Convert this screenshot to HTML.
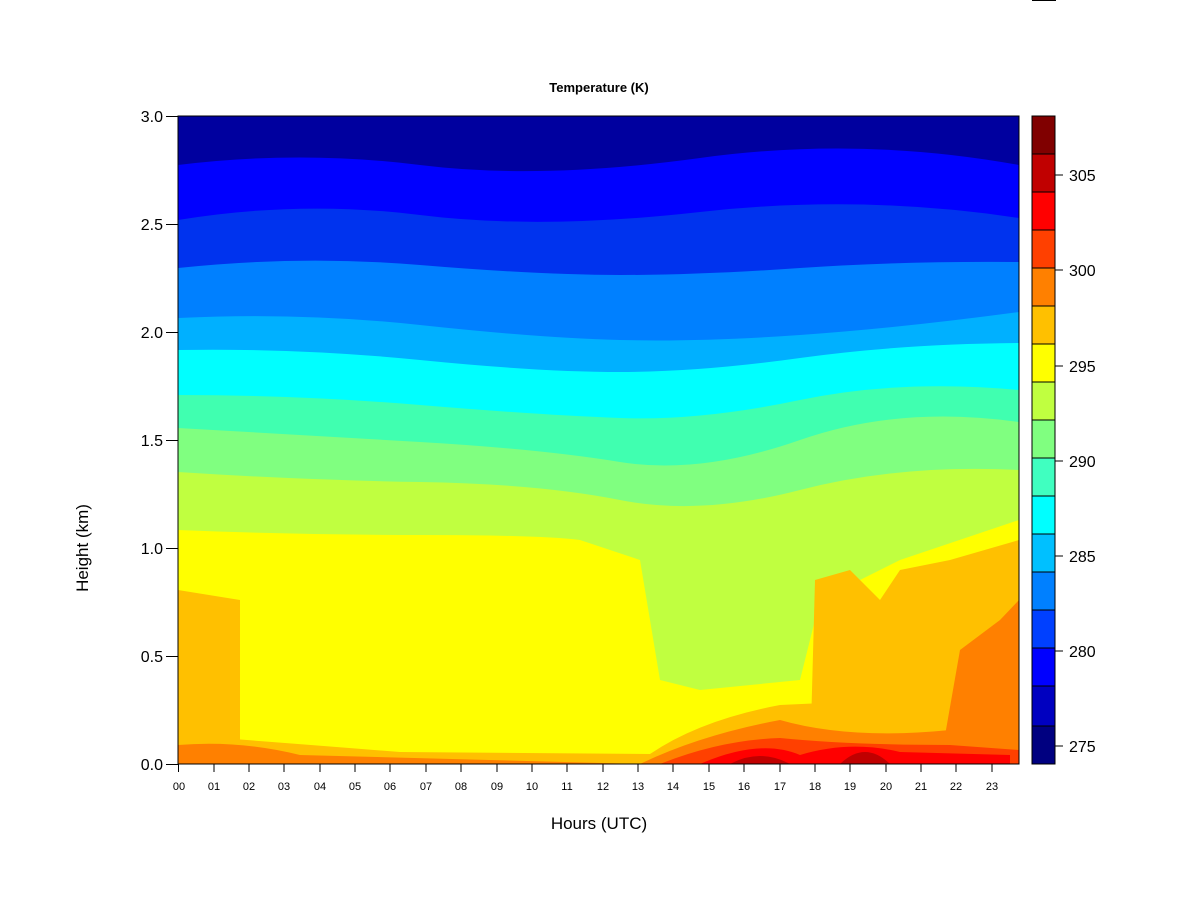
<!DOCTYPE html><html><head><style>body{margin:0;background:#fff}svg{display:block}text{font-family:"Liberation Sans",Arial,sans-serif}</style></head><body>
<svg width="1200" height="900" xmlns="http://www.w3.org/2000/svg">
<defs><clipPath id="c"><rect x="178" y="116" width="841" height="648"/></clipPath></defs>
<g clip-path="url(#c)">
<rect x="178" y="116" width="841" height="648" fill="#00009F"/>
<path d="M178 165 Q300 150 420 165 T700 158 T1019 165 V764 H178Z" fill="#0000FF"/>
<path d="M178 220 Q300 200 420 215 T700 212 T1019 218 V764 H178Z" fill="#0033EE"/>
<path d="M178 268 Q300 255 420 265 T620 275 T800 268 T1019 262 V764 H178Z" fill="#0080FF"/>
<path d="M178 318 Q300 312 420 325 T620 340 T800 335 T1019 312 V764 H178Z" fill="#00B0FF"/>
<path d="M178 350 Q300 348 420 360 T620 372 T800 358 T1019 343 V764 H178Z" fill="#00FFFF"/>
<path d="M178 395 Q300 395 420 405 T620 418 T800 400 T1019 390 V764 H178Z" fill="#40FFB0"/>
<path d="M178 428 Q300 435 420 442 T620 462 T800 440 T1019 422 V764 H178Z" fill="#80FF80"/>
<path d="M178 472 Q300 480 420 482 T620 500 T800 490 T1019 470 V764 H178Z" fill="#C0FF40"/>
<path d="M178 530 Q300 535 420 535 T580 540 L640 560 L660 680 L700 690 L800 680 L820 600 L900 560 L1019 520 V764 H178Z" fill="#FFFF00"/>
<path d="M810 764 L815 580 L850 570 L880 600 L900 570 L950 560 L1019 540 V764Z" fill="#FFC000"/>
<path d="M178 590 L240 600 L240 740 L178 740Z" fill="#FFC000"/>
<path d="M178 735 Q250 740 400 752 L650 754 Q700 720 780 705 Q900 700 1019 690 V764 H178Z" fill="#FFC000"/>
<path d="M940 764 L960 650 L1000 620 L1019 600 V764Z" fill="#FF8000"/>
<path d="M178 745 Q240 740 300 755 L640 764 Q700 735 780 720 Q850 740 950 730 L1019 720 V764 H178Z" fill="#FF8000"/>
<path d="M660 764 Q720 740 780 738 Q850 745 950 745 L1019 750 V764Z" fill="#FF4000"/>
<path d="M700 764 Q760 738 800 755 Q850 740 900 752 L1010 755 V764Z" fill="#FF0000"/>
<path d="M730 764 Q760 748 790 764Z M840 764 Q865 740 890 764Z" fill="#C00000"/>
</g>
<rect x="178" y="116" width="841" height="648" fill="none" stroke="#000" stroke-width="1"/>
<g stroke="#000" stroke-width="1" fill="#000"><line x1="178" y1="764" x2="1019" y2="764"/>
<line x1="166" y1="116.5" x2="178" y2="116.5"/><line x1="166" y1="224.5" x2="178" y2="224.5"/><line x1="166" y1="332.5" x2="178" y2="332.5"/><line x1="166" y1="440.5" x2="178" y2="440.5"/><line x1="166" y1="548.5" x2="178" y2="548.5"/><line x1="166" y1="656.5" x2="178" y2="656.5"/><line x1="166" y1="764.5" x2="178" y2="764.5"/></g>
<g font-size="16" text-anchor="end"><text x="163" y="122">3.0</text><text x="163" y="230">2.5</text><text x="163" y="338">2.0</text><text x="163" y="446">1.5</text><text x="163" y="554">1.0</text><text x="163" y="662">0.5</text><text x="163" y="770">0.0</text></g>
<text x="599" y="92" font-size="13" font-weight="bold" text-anchor="middle">Temperature (K)</text>
<text x="599" y="829" font-size="17" text-anchor="middle">Hours (UTC)</text>
<text transform="translate(88,548) rotate(-90)" font-size="17" text-anchor="middle">Height (km)</text>
<g stroke="#000" stroke-width="1">
<rect x="1032" y="116" width="23" height="38" fill="#800000"/><rect x="1032" y="154" width="23" height="38" fill="#C00000"/><rect x="1032" y="192" width="23" height="38" fill="#FF0000"/><rect x="1032" y="230" width="23" height="38" fill="#FF4000"/><rect x="1032" y="268" width="23" height="38" fill="#FF8000"/><rect x="1032" y="306" width="23" height="38" fill="#FFC000"/><rect x="1032" y="344" width="23" height="38" fill="#FFFF00"/><rect x="1032" y="382" width="23" height="38" fill="#C0FF40"/><rect x="1032" y="420" width="23" height="38" fill="#80FF80"/><rect x="1032" y="458" width="23" height="38" fill="#40FFC0"/><rect x="1032" y="496" width="23" height="38" fill="#00FFFF"/><rect x="1032" y="534" width="23" height="38" fill="#00C0FF"/><rect x="1032" y="572" width="23" height="38" fill="#0080FF"/><rect x="1032" y="610" width="23" height="38" fill="#0040FF"/><rect x="1032" y="648" width="23" height="38" fill="#0000FF"/><rect x="1032" y="686" width="23" height="40" fill="#0000C0"/><rect x="1032" y="726" width="23" height="38" fill="#000080"/>
<line x1="1055" y1="175" x2="1063" y2="175"/><line x1="1055" y1="270" x2="1063" y2="270"/><line x1="1055" y1="366" x2="1063" y2="366"/><line x1="1055" y1="461" x2="1063" y2="461"/><line x1="1055" y1="556" x2="1063" y2="556"/><line x1="1055" y1="651" x2="1063" y2="651"/><line x1="1055" y1="746" x2="1063" y2="746"/></g>
<g font-size="16"><text x="1069" y="181">305</text><text x="1069" y="276">300</text><text x="1069" y="372">295</text><text x="1069" y="467">290</text><text x="1069" y="562">285</text><text x="1069" y="657">280</text><text x="1069" y="752">275</text></g>
<rect x="1032" y="0" width="24" height="1" fill="#000"/>
<g stroke="#000"><path d="M178.5 764v8M214 764v8M249 764v8M284 764v8M320 764v8M355 764v8M390 764v8M426 764v8M461 764v8M497 764v8M532 764v8M567 764v8M603 764v8M638 764v8M673 764v8M709 764v8M744 764v8M780 764v8M815 764v8M850 764v8M886 764v8M921 764v8M956 764v8M992 764v8"/></g>
<g font-size="11" text-anchor="middle"><text x="179" y="790">00</text><text x="214" y="790">01</text><text x="249" y="790">02</text><text x="284" y="790">03</text><text x="320" y="790">04</text><text x="355" y="790">05</text><text x="390" y="790">06</text><text x="426" y="790">07</text><text x="461" y="790">08</text><text x="497" y="790">09</text><text x="532" y="790">10</text><text x="567" y="790">11</text><text x="603" y="790">12</text><text x="638" y="790">13</text><text x="673" y="790">14</text><text x="709" y="790">15</text><text x="744" y="790">16</text><text x="780" y="790">17</text><text x="815" y="790">18</text><text x="850" y="790">19</text><text x="886" y="790">20</text><text x="921" y="790">21</text><text x="956" y="790">22</text><text x="992" y="790">23</text></g>
</svg>
</body></html>
